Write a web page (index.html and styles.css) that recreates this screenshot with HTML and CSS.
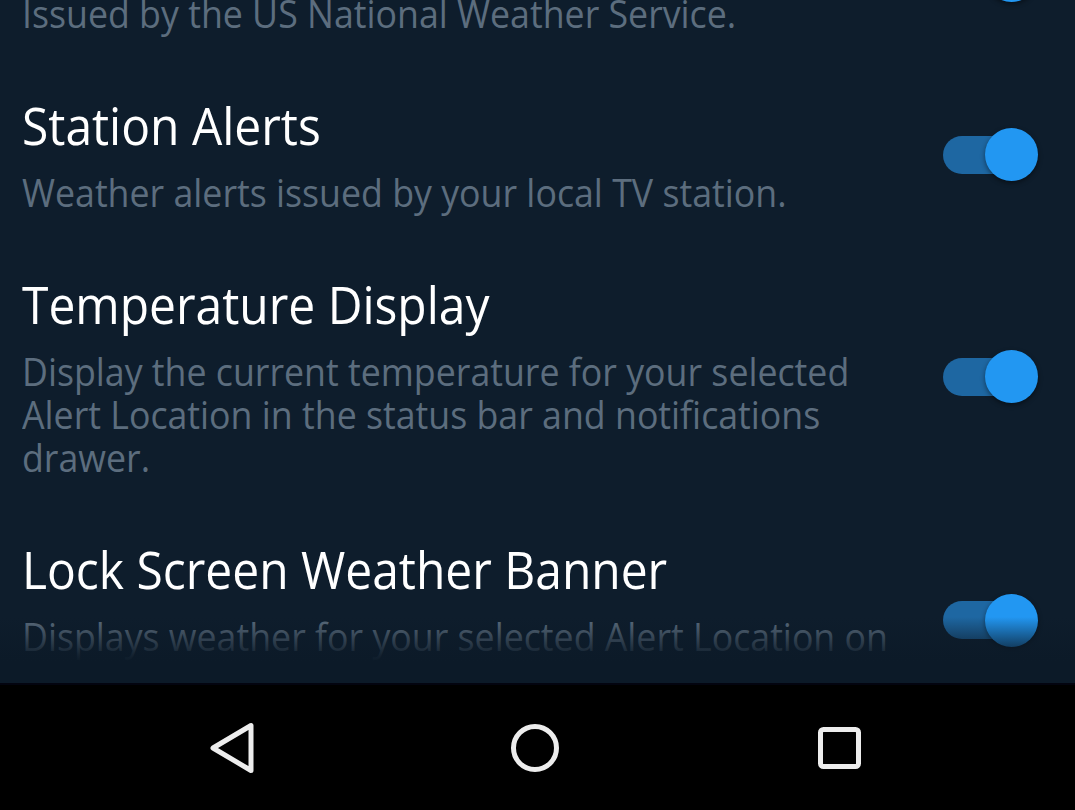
FILE: index.html
```html
<!DOCTYPE html>
<html lang="en">
<head>
<meta charset="utf-8">
<title>Alert Settings</title>
<link rel="stylesheet" href="styles.css">
</head>
<body>
<div class="screen">
  <main class="content">
    <div class="list">
      <section class="row">
        <div class="text">
          <h2 class="title">NWS Alerts</h2>
          <p class="desc">Issued by the US National Weather Service.</p>
        </div>
        <div class="switch"><span class="track"></span><span class="thumb"></span></div>
      </section>
      <section class="row">
        <div class="text">
          <h2 class="title">Station Alerts</h2>
          <p class="desc">Weather alerts issued by your local TV station.</p>
        </div>
        <div class="switch"><span class="track"></span><span class="thumb"></span></div>
      </section>
      <section class="row">
        <div class="text">
          <h2 class="title">Temperature Display</h2>
          <p class="desc">Display the current temperature for your selected<br>Alert Location in the status bar and notifications<br>drawer.</p>
        </div>
        <div class="switch"><span class="track"></span><span class="thumb"></span></div>
      </section>
      <section class="row">
        <div class="text">
          <h2 class="title">Lock Screen Weather Banner</h2>
          <p class="desc">Displays weather for your selected Alert Location on<br>the lock screen.</p>
        </div>
        <div class="switch"><span class="track"></span><span class="thumb"></span></div>
      </section>
    </div>
    <div class="fade"></div>
  </main>
  <nav class="navbar">
    <span class="nav-btn">
      <svg width="60" height="60" viewBox="0 0 60 60"><path d="M11 30 L49 7.5 L49 52.5 Z" fill="none" stroke="#ededed" stroke-width="5" stroke-linejoin="round"/></svg>
    </span>
    <span class="nav-btn">
      <svg width="60" height="60" viewBox="0 0 60 60"><circle cx="30" cy="30" r="21.5" fill="none" stroke="#ededed" stroke-width="5"/></svg>
    </span>
    <span class="nav-btn">
      <svg width="60" height="60" viewBox="0 0 60 60"><rect x="12.5" y="11.5" width="38" height="37" rx="3" fill="none" stroke="#ededed" stroke-width="5"/></svg>
    </span>
  </nav>
</div>
</body>
</html>
```
FILE: styles.css
```css
* { box-sizing: border-box; }
html, body {
  margin: 0;
  padding: 0;
  background: #0e1d2c;
}
body {
  width: 1075px;
  height: 810px;
  overflow: hidden;
  font-family: "Open Sans", "Noto Sans", "DejaVu Sans", sans-serif;
}
.screen {
  display: flex;
  flex-direction: column;
  height: 810px;
}
.content {
  position: relative;
  height: 683px;
  overflow: hidden;
  background: #0e1d2c;
}
.list {
  margin-top: -114px;
}
.row {
  display: flex;
  align-items: center;
  padding: 30px 37px 30px 22px;
}
.text {
  flex: 1;
  min-width: 0;
  transform: scaleX(0.94);
  transform-origin: left center;
}
.title {
  margin: 0 0 16px;
  font-size: 51px;
  line-height: 60px;
  font-weight: 400;
  color: #ffffff;
  white-space: nowrap;
}
.desc {
  margin: 0;
  font-size: 38px;
  line-height: 43px;
  color: #5c6d7e;
  white-space: nowrap;
}
.switch {
  position: relative;
  flex: none;
  width: 95px;
  height: 53px;
}
.track {
  position: absolute;
  left: 0;
  top: 7.5px;
  width: 88px;
  height: 38px;
  border-radius: 19px;
  background: #1e67a2;
}
.thumb {
  position: absolute;
  right: 0;
  top: 0;
  width: 53px;
  height: 53px;
  border-radius: 50%;
  background: #2297f2;
  box-shadow: 0 2px 5px rgba(0, 0, 0, 0.45);
}
.fade {
  position: absolute;
  left: 0;
  right: 0;
  bottom: 0;
  height: 66px;
  background: linear-gradient(to bottom, rgba(14, 29, 44, 0) 0%, rgba(12, 26, 40, 0.55) 35%, rgba(12, 26, 40, 0.9) 58%, #0c1a28 68%, #0c1a28 100%);
}
.navbar {
  flex: 1;
  display: flex;
  align-items: center;
  justify-content: center;
  gap: 243px;
  padding-right: 5px;
  background: #000;
  border-top: 2px solid #03040f;
}
.nav-btn {
  display: flex;
  width: 60px;
  height: 60px;
}
```
